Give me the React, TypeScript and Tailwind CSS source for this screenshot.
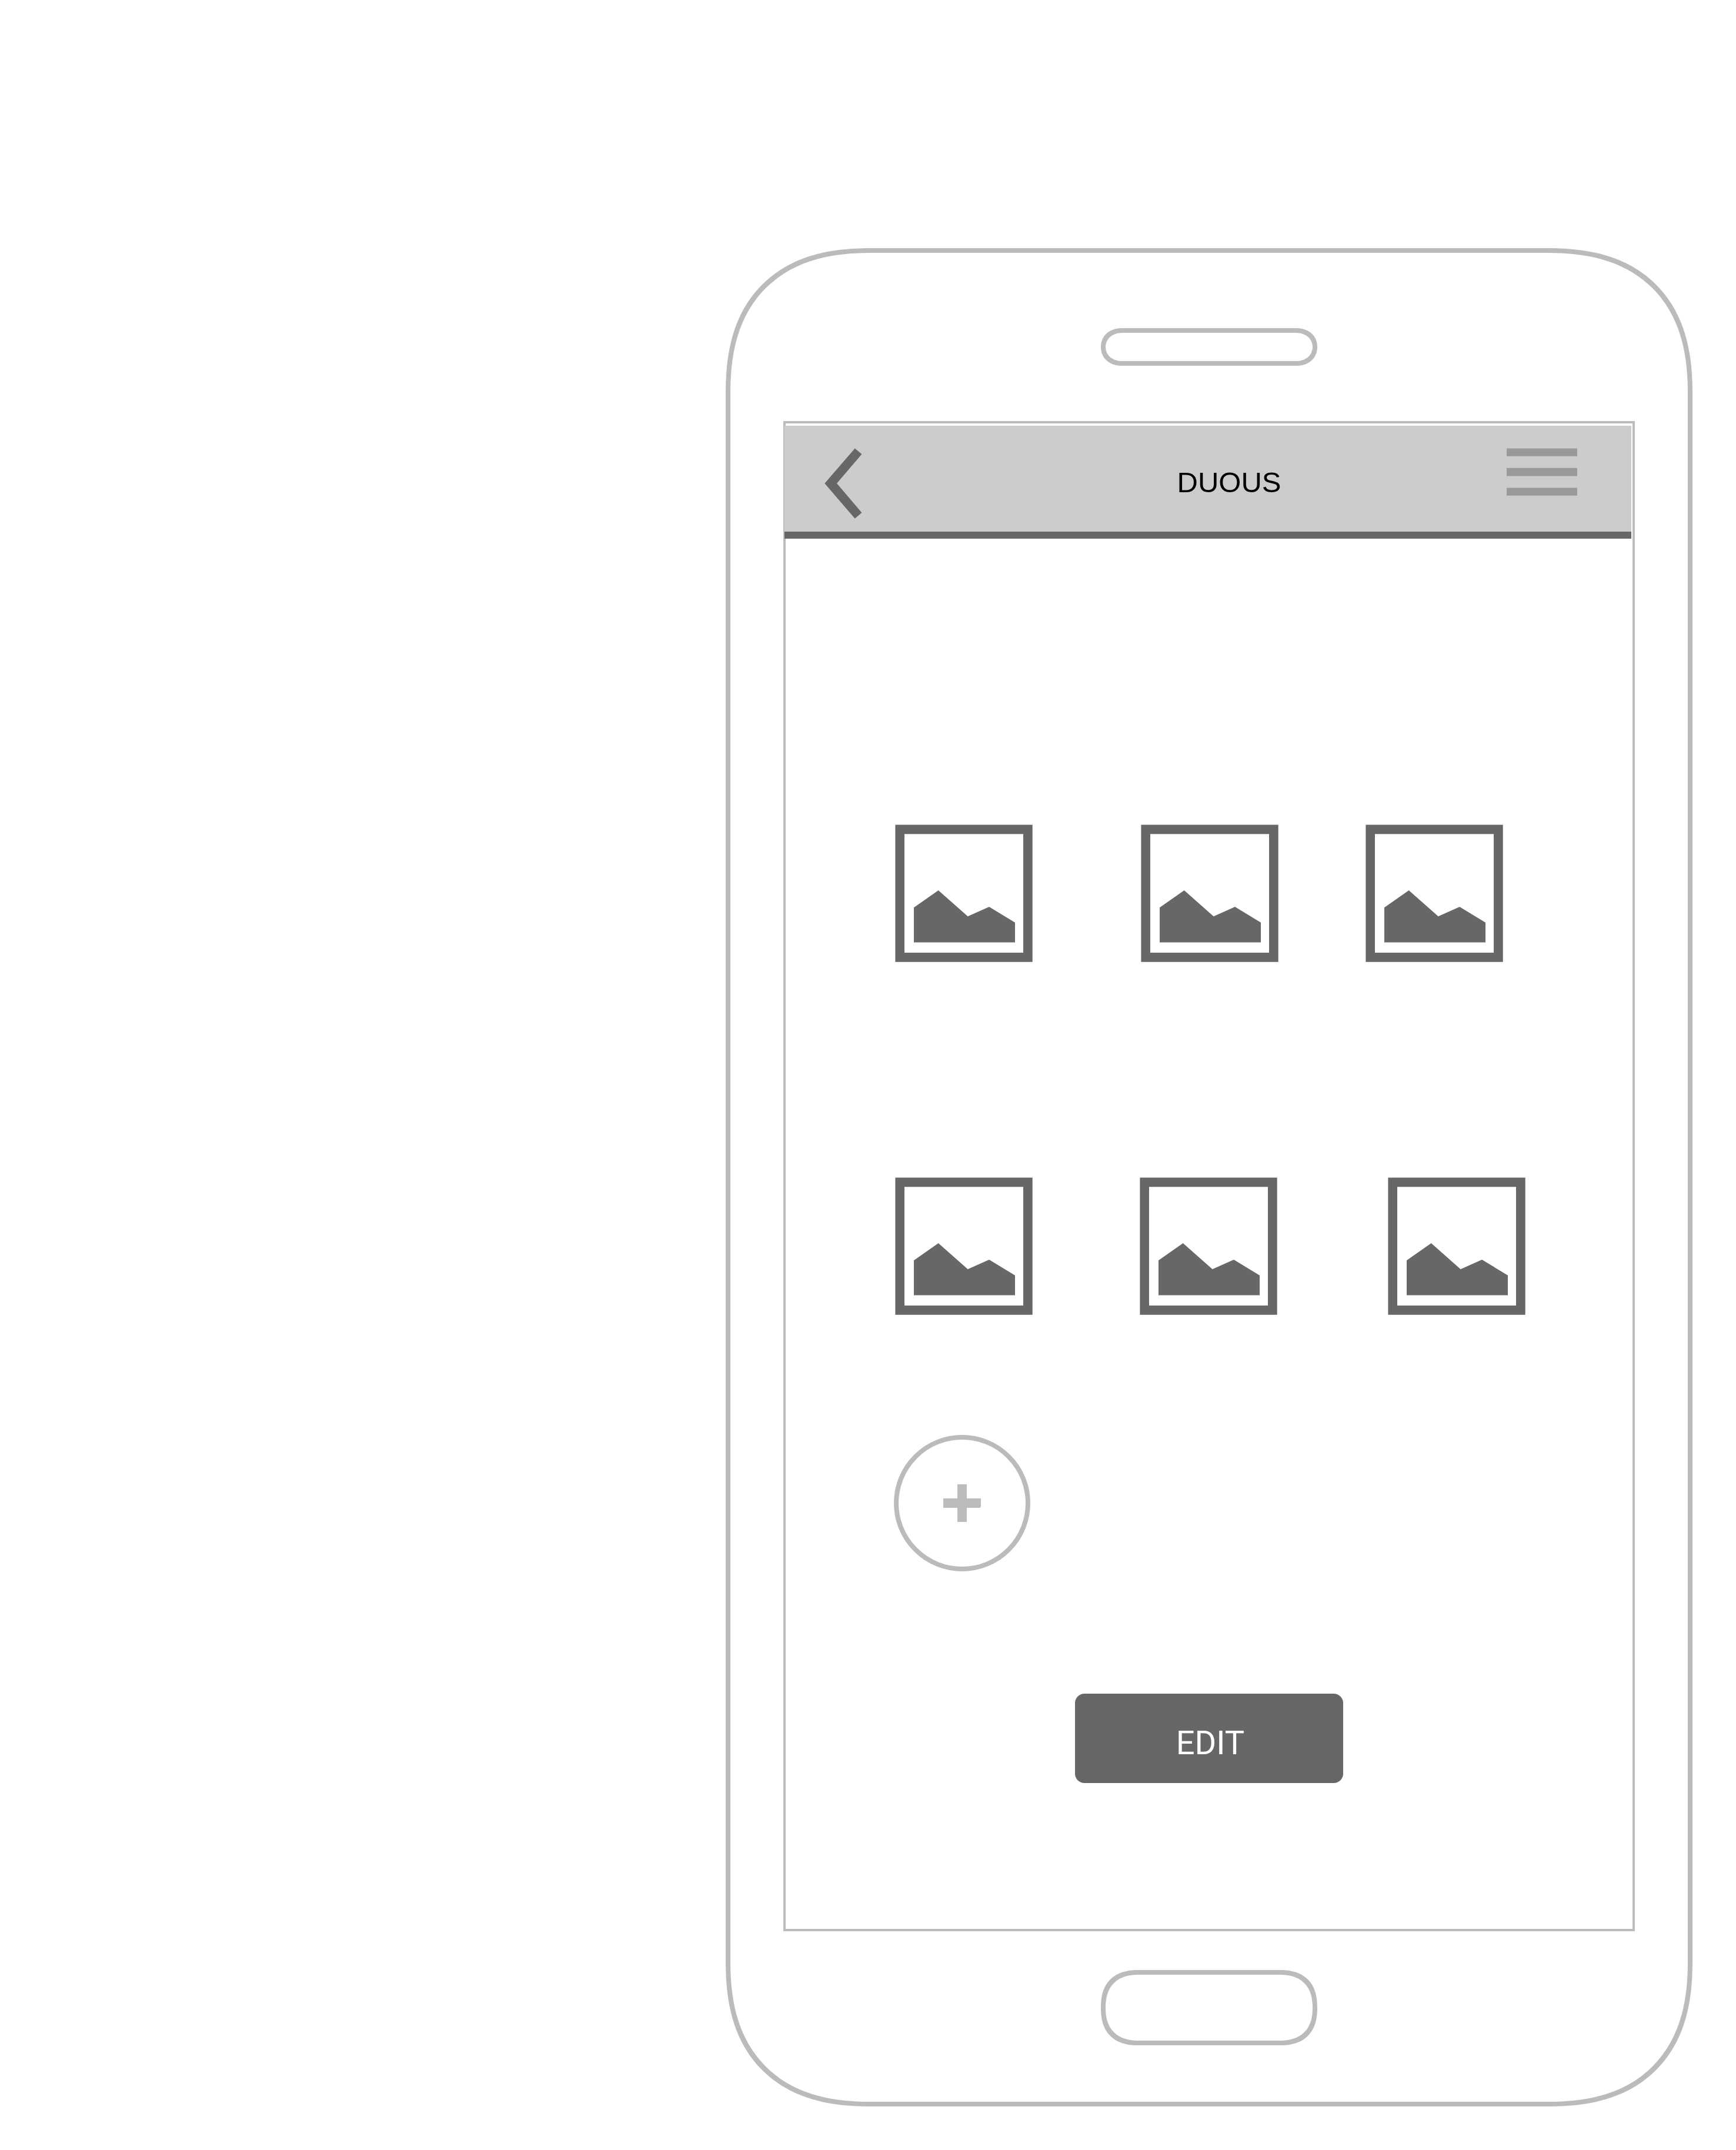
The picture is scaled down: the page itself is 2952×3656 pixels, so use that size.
import React from "react";

const tileRows = [
  [
    { label: "Picture 1", space: "" },
    { label: "Picture 2", space: "ml-[184px]" },
    { label: "Picture 3", space: "ml-[148px]" },
  ],
  [
    { label: "Picture 4", space: "" },
    { label: "Picture 5", space: "ml-[182px]" },
    { label: "Picture 6", space: "ml-[188px]" },
  ],
];

function PictureTile({ label, space }: { label: string; space: string }) {
  return (
    <svg
      role="img"
      aria-label={label}
      viewBox="0 0 234 234"
      className={`h-[234px] w-[234px] shrink-0 fill-[#676767] ${space}`}
    >
      <path
        fillRule="evenodd"
        d="M0.4 0.4H233.7V233.7H0.4ZM16 16.2V218H218V16.2Z"
      />
      <path d="M32 141.3L73.7 112L123.7 156.3L160 140L204 166.7V200.4H32Z" />
    </svg>
  );
}

function BackIcon() {
  return (
    <svg viewBox="0 0 64 120" className="h-[120px] w-16 fill-[#676767]" aria-hidden="true">
      <path d="M51.7 0.5L63.4 10.3L21 60L63.4 109.7L51.7 119.7L0.3 60Z" />
    </svg>
  );
}

function MenuIcon() {
  return (
    <svg viewBox="0 0 120 82" className="h-[82px] w-[120px] fill-[#999999]" aria-hidden="true">
      <path d="M0 0.4H120V13.7H0ZM0 33.8H120V47.4H0ZM0 67.4H120V80.7H0Z" />
    </svg>
  );
}

function PlusIcon() {
  return (
    <svg viewBox="0 0 64 64" className="h-16 w-16 fill-[#bbbbbb]" aria-hidden="true">
      <path d="M24 0H40V24H64V38L62 40H40V64H24V40H0V24H24Z" />
    </svg>
  );
}

function Header() {
  return (
    <header className="-ml-[2px] mr-[2px] mt-1 flex h-48 items-start border-b-12 border-[#676767] bg-[#cccccc] pl-[68px] pr-[92px] pt-[38px]">
      <button type="button" aria-label="Back" className="shrink-0">
        <BackIcon />
      </button>
      <h1 className="flex-1 pl-[152px] text-center text-[49px] leading-[116px] text-black">
        DUOUS
      </h1>
      <button type="button" aria-label="Menu" className="shrink-0">
        <MenuIcon />
      </button>
    </header>
  );
}

export default function App() {
  return (
    <main className="flex min-h-screen justify-end bg-white pb-[74px] pl-4 pr-[74px] pt-[422px] font-['Liberation_Sans',Arial,sans-serif]">
      <div className="flex w-full max-w-[1644px] flex-col items-center rounded-[248px] border-8 border-[#bbbbbb] px-[90px] pb-24 pt-32 [corner-shape:superellipse(1.27)]">
        <div className="h-16 w-[368px] rounded-[36px/32px] border-8 border-[#bbbbbb] [corner-shape:superellipse(1.1)]" />

        <section className="mt-[94px] flex w-full flex-col border-4 border-[#bbbbbb] pb-[248px]">
          <Header />

          <div className="mt-[486px] flex flex-col gap-[366px] pl-[186px]">
            {tileRows.map((row) => (
              <div key={row[0].label} className="flex">
                {row.map((tile) => (
                  <PictureTile key={tile.label} label={tile.label} space={tile.space} />
                ))}
              </div>
            ))}
          </div>

          <button
            type="button"
            aria-label="Add picture"
            className="ml-[184px] mt-[204px] flex h-[232px] w-[232px] items-center justify-center rounded-full border-8 border-[#bbbbbb]"
          >
            <PlusIcon />
          </button>

          <button
            type="button"
            className="mt-[208px] flex h-[152px] w-[456px] items-center justify-center self-center rounded-2xl bg-[#676767] pl-1 pt-4 font-['Roboto',sans-serif] text-[56px] leading-none text-white"
          >
            EDIT
          </button>
        </section>

        <button
          type="button"
          aria-label="Home"
          className="mt-[66px] h-32 w-[368px] rounded-[64px] border-8 border-[#bbbbbb] [corner-shape:superellipse(1.27)]"
        />
      </div>
    </main>
  );
}
